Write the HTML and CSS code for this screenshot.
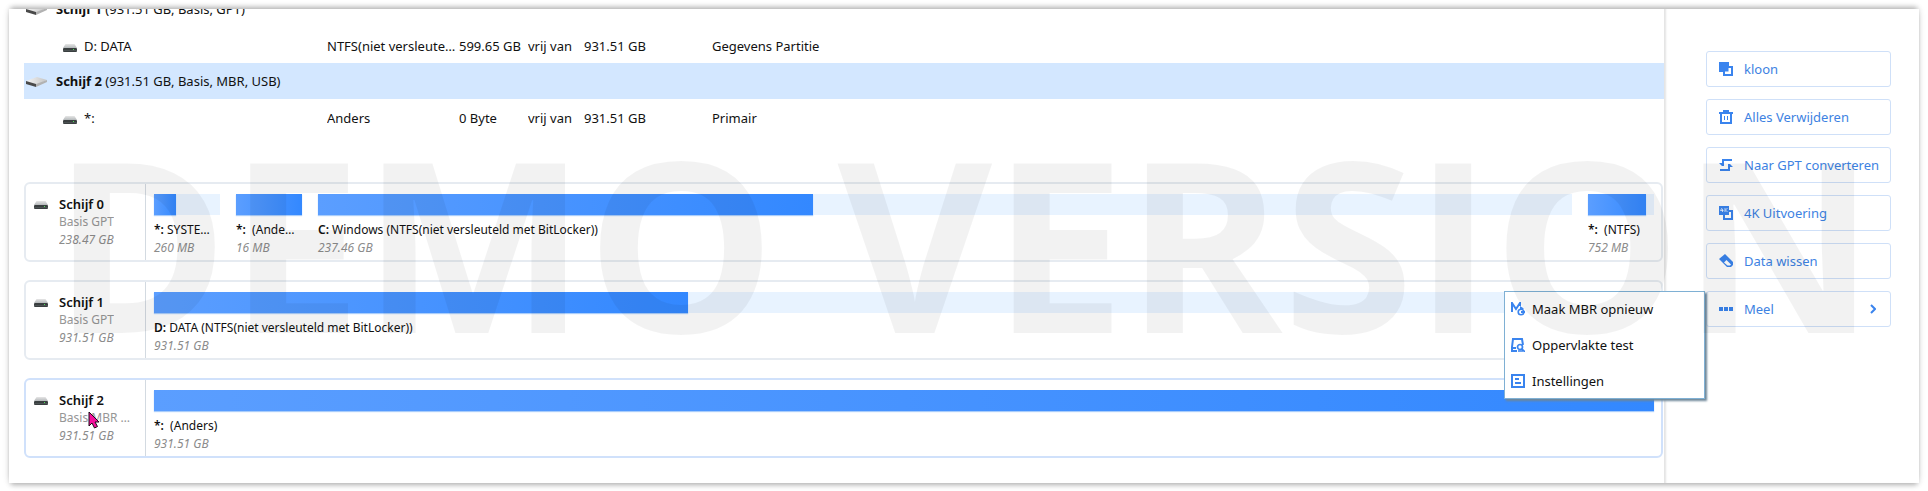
FILE: index.html
```html
<!DOCTYPE html>
<html lang="nl">
<head>
    <meta charset="UTF-8">
    <meta name="viewport" content="width=device-width, initial-scale=1.0">
    <title>Partitiebeheer</title>
    <link rel="stylesheet" href="styles.css">
</head>
<body>
    <!-- shared icons -->
    <svg class="sprite" aria-hidden="true">
        <defs>
            <linearGradient id="metal" x1="0" y1="0" x2="0" y2="1">
                <stop offset="0" stop-color="#e6e6e6"/>
                <stop offset="1" stop-color="#b4b8ba"/>
            </linearGradient>
            <linearGradient id="metal-side" x1="0" y1="0" x2="1" y2="0">
                <stop offset="0" stop-color="#f4f4f4"/>
                <stop offset="1" stop-color="#c4c4c4"/>
            </linearGradient>
        </defs>
        <symbol id="drive" viewBox="0 0 14 8">
            <path d="M2.5 0h9L14 4H0z" fill="url(#metal)"/>
            <rect x="0" y="4" width="14" height="4" rx="1" fill="#3a3f40"/>
            <rect x="0" y="6" width="14" height="1" fill="#4c5253"/>
            <rect x="10" y="5" width="1" height="1" fill="#4fe05a"/>
        </symbol>
        <symbol id="disk" viewBox="0 0 22 12">
            <path d="M1 5L12 1l10 3-11 5z" fill="url(#metal-side)"/>
            <path d="M11 8l11-4v2l-11 5z" fill="#b2b2b2"/>
            <path d="M1 5l10 3v3L1 8z" fill="#4a4a4a"/>
        </symbol>
    </svg>

    <div class="window">
        <main class="content">
            <div class="list-wrap">
                <table class="partitions">
                    <colgroup>
                        <col>
                        <col class="col-fs">
                        <col class="col-free">
                        <col class="col-of">
                        <col class="col-total">
                        <col class="col-type">
                    </colgroup>
                    <tbody>
                        <tr class="disk-row">
                            <th colspan="6" scope="rowgroup"><svg class="disk-icon"><use href="#disk"/></svg><b>Schijf 1</b> (931.51 GB, Basis, GPT)</th>
                        </tr>
                        <tr>
                            <td class="name"><svg class="drive-icon"><use href="#drive"/></svg>D: DATA</td>
                            <td class="fs">NTFS(niet versleuteld met BitLocker)</td>
                            <td>599.65 GB</td>
                            <td>vrij van</td>
                            <td>931.51 GB</td>
                            <td>Gegevens Partitie</td>
                        </tr>
                        <tr class="disk-row selected">
                            <th colspan="6" scope="rowgroup"><svg class="disk-icon"><use href="#disk"/></svg><b>Schijf 2</b> (931.51 GB, Basis, MBR, USB)</th>
                        </tr>
                        <tr>
                            <td class="name"><svg class="drive-icon"><use href="#drive"/></svg>*:</td>
                            <td class="fs">Anders</td>
                            <td>0 Byte</td>
                            <td>vrij van</td>
                            <td>931.51 GB</td>
                            <td>Primair</td>
                        </tr>
                    </tbody>
                </table>
            </div>

            <section class="disks">
                <article class="disk-card">
                    <div class="disk-info">
                        <svg class="drive-icon"><use href="#drive"/></svg>
                        <div class="disk-text">
                            <h2>Schijf 0</h2>
                            <p>Basis GPT</p>
                            <p class="size">238.47 GB</p>
                        </div>
                    </div>
                    <div class="parts">
                        <div class="part small">
                            <div class="bar"><div class="used" style="width: 34%"></div></div>
                            <p class="label"><b>*:</b> SYSTEM (FAT32)</p>
                            <p class="size">260 MB</p>
                        </div>
                        <div class="part small">
                            <div class="bar"><div class="used" style="width: 100%"></div></div>
                            <p class="label"><b>*:</b> &nbsp;(Anders)</p>
                            <p class="size">16 MB</p>
                        </div>
                        <div class="part">
                            <div class="bar"><div class="used" style="width: 39.5%"></div></div>
                            <p class="label"><b>C:</b> Windows (NTFS(niet versleuteld met BitLocker))</p>
                            <p class="size">237.46 GB</p>
                        </div>
                        <div class="part small">
                            <div class="bar"><div class="used" style="width: 88%"></div></div>
                            <p class="label"><b>*:</b> &nbsp;(NTFS)</p>
                            <p class="size">752 MB</p>
                        </div>
                    </div>
                </article>

                <article class="disk-card">
                    <div class="disk-info">
                        <svg class="drive-icon"><use href="#drive"/></svg>
                        <div class="disk-text">
                            <h2>Schijf 1</h2>
                            <p>Basis GPT</p>
                            <p class="size">931.51 GB</p>
                        </div>
                    </div>
                    <div class="parts">
                        <div class="part">
                            <div class="bar"><div class="used" style="width: 35.6%"></div></div>
                            <p class="label"><b>D:</b> DATA (NTFS(niet versleuteld met BitLocker))</p>
                            <p class="size">931.51 GB</p>
                        </div>
                    </div>
                </article>

                <article class="disk-card active">
                    <div class="disk-info">
                        <svg class="drive-icon"><use href="#drive"/></svg>
                        <div class="disk-text">
                            <h2>Schijf 2</h2>
                            <p>Basis MBR USB</p>
                            <p class="size">931.51 GB</p>
                            <svg class="pointer" viewBox="0 0 12 18" aria-hidden="true"><path d="M1 1v14l3-3 2.5 5 3-1.500L7 11h4z" fill="#f5109c" stroke="#1a0a14"/></svg>
                        </div>
                    </div>
                    <div class="parts">
                        <div class="part">
                            <div class="bar"><div class="used" style="width: 100%"></div></div>
                            <p class="label"><b>*:</b> &nbsp;(Anders)</p>
                            <p class="size">931.51 GB</p>
                        </div>
                    </div>
                </article>
            </section>
        </main>

        <aside class="actions">
            <button type="button">
                <svg viewBox="0 0 14 14"><path d="M0 0h10v10H0z" fill="currentColor"/><path d="M10 5h3v8H5v-3" fill="none" stroke="currentColor" stroke-width="2"/><path d="M6 10h4V6" fill="none" stroke="#fff"/></svg>
                kloon
            </button>
            <button type="button">
                <svg viewBox="0 0 14 14"><path d="M4 0h6v2H4zM0 2h14v2H0z" fill="currentColor"/><path d="M2 3v10h10V3" fill="none" stroke="currentColor" stroke-width="2"/><path d="M5.500 6v4M8.500 6v4" stroke="currentColor"/></svg>
                Alles Verwijderen
            </button>
            <button type="button">
                <svg viewBox="0 0 14 14"><path d="M13 2H4v5M1 12h9V7" fill="none" stroke="currentColor" stroke-width="2"/><path d="M0 5h5v3H3zM9 6h2l3 3H9z" fill="currentColor"/></svg>
                Naar GPT converteren
            </button>
            <button type="button">
                <svg viewBox="0 0 14 14"><path d="M0 0h10v9H0z" fill="currentColor"/><path d="M10 5h3v8H5v-4" fill="none" stroke="currentColor" stroke-width="2"/><path d="M3 2L1.500 4.500H4.500M3.500 3v3M6 2v4M8.500 2L6.500 4 8.500 6" fill="none" stroke="#fff" stroke-width=".7"/></svg>
                4K Uitvoering
            </button>
            <button type="button">
                <svg viewBox="0 0 14 14"><path d="M6 0l8 8v3l-2 2H8L0 5z" fill="currentColor"/><path d="M7.500 6l4.500 4.500-1 1H8.500L5 8.500z" fill="#fff"/></svg>
                Data wissen
            </button>
            <div class="more">
                <button type="button" aria-haspopup="menu" aria-expanded="true">
                    <svg viewBox="0 0 14 14"><path d="M0 5h4v4H0zM5 5h4v4H5zM10 5h4v4h-4z" fill="currentColor"/></svg>
                    Meel
                    <svg class="chevron" viewBox="0 0 6 10"><path d="M1 1l4 4-4 4" fill="none" stroke="currentColor" stroke-width="2"/></svg>
                </button>
                <div class="menu" role="menu">
                    <button type="button" role="menuitem">
                        <svg viewBox="0 0 14 14"><path d="M1 10V1l4 6 4-6v3" fill="none" stroke="currentColor" stroke-width="2"/><circle cx="10" cy="10" r="2.800" fill="none" stroke="currentColor" stroke-width="1.600"/><path d="M9 8V4l4 2.500zM10 9h4v2h-4z" fill="currentColor"/></svg>
                        Maak MBR opnieuw
                    </button>
                    <button type="button" role="menuitem">
                        <svg viewBox="0 0 14 14"><path d="M6 13H1V9l1-8h9l1 6M1 10h4" fill="none" stroke="currentColor" stroke-width="2"/><circle cx="9" cy="9" r="2.500" fill="none" stroke="currentColor" stroke-width="1.700"/><path d="M11 11l3 3M7 13h5" stroke="currentColor" stroke-width="1.700"/></svg>
                        Oppervlakte test
                    </button>
                    <button type="button" role="menuitem">
                        <svg viewBox="0 0 14 14"><path d="M1 1h12v12H1z" fill="none" stroke="currentColor" stroke-width="2"/><path d="M4 5h4M4 9h6" stroke="currentColor" stroke-width="2"/></svg>
                        Instellingen
                    </button>
                </div>
            </div>
        </aside>

        <div class="watermark" aria-hidden="true">DEMO VERSION</div>
    </div>
</body>
</html>
```
FILE: styles.css
```css
* { margin: 0; padding: 0; box-sizing: border-box; }
body {
    font-family: "Noto Sans", "Open Sans", sans-serif;
    font-size: 13px; line-height: 18px; color: #111;
    background: #fff; padding: 9px;
}
button { font: inherit; cursor: pointer; }
.sprite { position: absolute; width: 0; height: 0; }

.window {
    position: relative; display: flex; min-height: calc(100vh - 18px);
    background: #fff;
    box-shadow: 0 0 7px rgba(0, 0, 0, 0.12),
                0 -4px 5px -2px rgba(0, 0, 0, 0.25),
                0 4px 5px -2px rgba(0, 0, 0, 0.25);
}
.content { flex: 1; min-width: 0; padding-left: 15px; }

/* partition list, scrolled a little past its first row */
.list-wrap { display: flex; flex-direction: column; justify-content: flex-end; height: 126px; overflow: hidden; }
.partitions { width: 100%; border-collapse: collapse; table-layout: fixed; }
.partitions tr { height: 36px; }
.partitions td, .partitions th {
    font-weight: normal; text-align: left; white-space: nowrap;
    overflow: hidden; text-overflow: ellipsis;
}
.partitions td { padding-top: 2px; }
.partitions col { width: 303px; }
.partitions .col-fs { width: 132px; }
.partitions .col-free { width: 69px; }
.partitions .col-of { width: 56px; }
.partitions .col-total { width: 128px; }
.partitions .col-type { width: auto; }
.partitions .name { padding-left: 39px; }
.partitions .fs { padding-right: 2px; }
.selected { background: #d3e7ff; }
.disk-icon { width: 22px; height: 12px; margin: 0 9px 0 1px; vertical-align: -2px; }
.drive-icon { width: 14px; height: 8px; margin-right: 7px; vertical-align: -1px; }

.disks { display: flex; flex-direction: column; gap: 18px; padding: 47px 1px 25px 0; }
.disk-card {
    display: flex; height: 80px;
    border: 2px solid #e6ebf1; border-radius: 6px;
}
.disk-card.active { border-color: #d0e1fb; }
.disk-info {
    display: flex; width: 120px; padding: 11px 8px 0 8px;
    border-right: 1px solid #d3dae1;
}
.disk-info .drive-icon { flex: none; margin: 6px 11px 0 0; }
.disk-text { position: relative; min-width: 0; }
.disk-text h2 { font-size: 13px; font-weight: 600; line-height: 18px; }
.disk-text p {
    color: #969696; font-size: 12px; line-height: 18px;
    white-space: nowrap; overflow: hidden; text-overflow: ellipsis;
}
.disk-card .size { color: #8c8c8c; font-size: 12px; font-style: italic; line-height: 18px; }
.pointer { position: absolute; left: 29px; top: 20px; width: 12px; height: 18px; }

.parts { display: flex; flex: 1; gap: 16px; min-width: 0; padding: 10px 7px 0 8px; }
.part { flex: 1; min-width: 0; }
.part.small { flex: none; width: 66px; }
.bar { height: 21px; margin-bottom: 6px; background: #e8f3ff; }
.used {
    height: 21px; background: linear-gradient(90deg, #5b9eff, #3388ff);
    box-shadow: 0 1px 1px #a9cdfb;
}
.label { font-size: 12px; line-height: 18px; white-space: nowrap; overflow: hidden; text-overflow: ellipsis; }
.label b { font-weight: 600; }
.small .label { padding-right: 6px; }

.actions {
    display: flex; flex-direction: column; gap: 12px; width: 255px;
    padding: 42px 28px 0 42px; box-shadow: inset 3px 0 2px -1px #e4e4e4;
}
.actions button {
    display: flex; align-items: center; gap: 11px; width: 100%; height: 36px;
    padding: 0 12px; color: #3d82e2; text-align: left; white-space: nowrap;
    background: none; border: 1px solid #cfe0f8; border-radius: 3px;
}
.actions svg { flex: none; width: 14px; height: 14px; color: #3a84ee; }
.actions .chevron { width: 6px; height: 10px; margin-left: auto; margin-right: 2px; }

.more { position: relative; }
.more .menu {
    position: absolute; top: 0; right: calc(100% + 1px); width: 201px;
    background: #fff; outline: 1px solid #7fb0d4; outline-offset: -1px;
    box-shadow: 2px 2px 2px #6f8799;
}
.menu button { gap: 7px; padding: 0 7px; color: #111; border: none; }

.watermark {
    position: absolute; left: 0; right: 0; top: 67px;
    font: bold 238px/330px "Open Sans", sans-serif; text-align: center;
    white-space: nowrap; color: rgba(0, 0, 0, 0.05); pointer-events: none;
}
```
